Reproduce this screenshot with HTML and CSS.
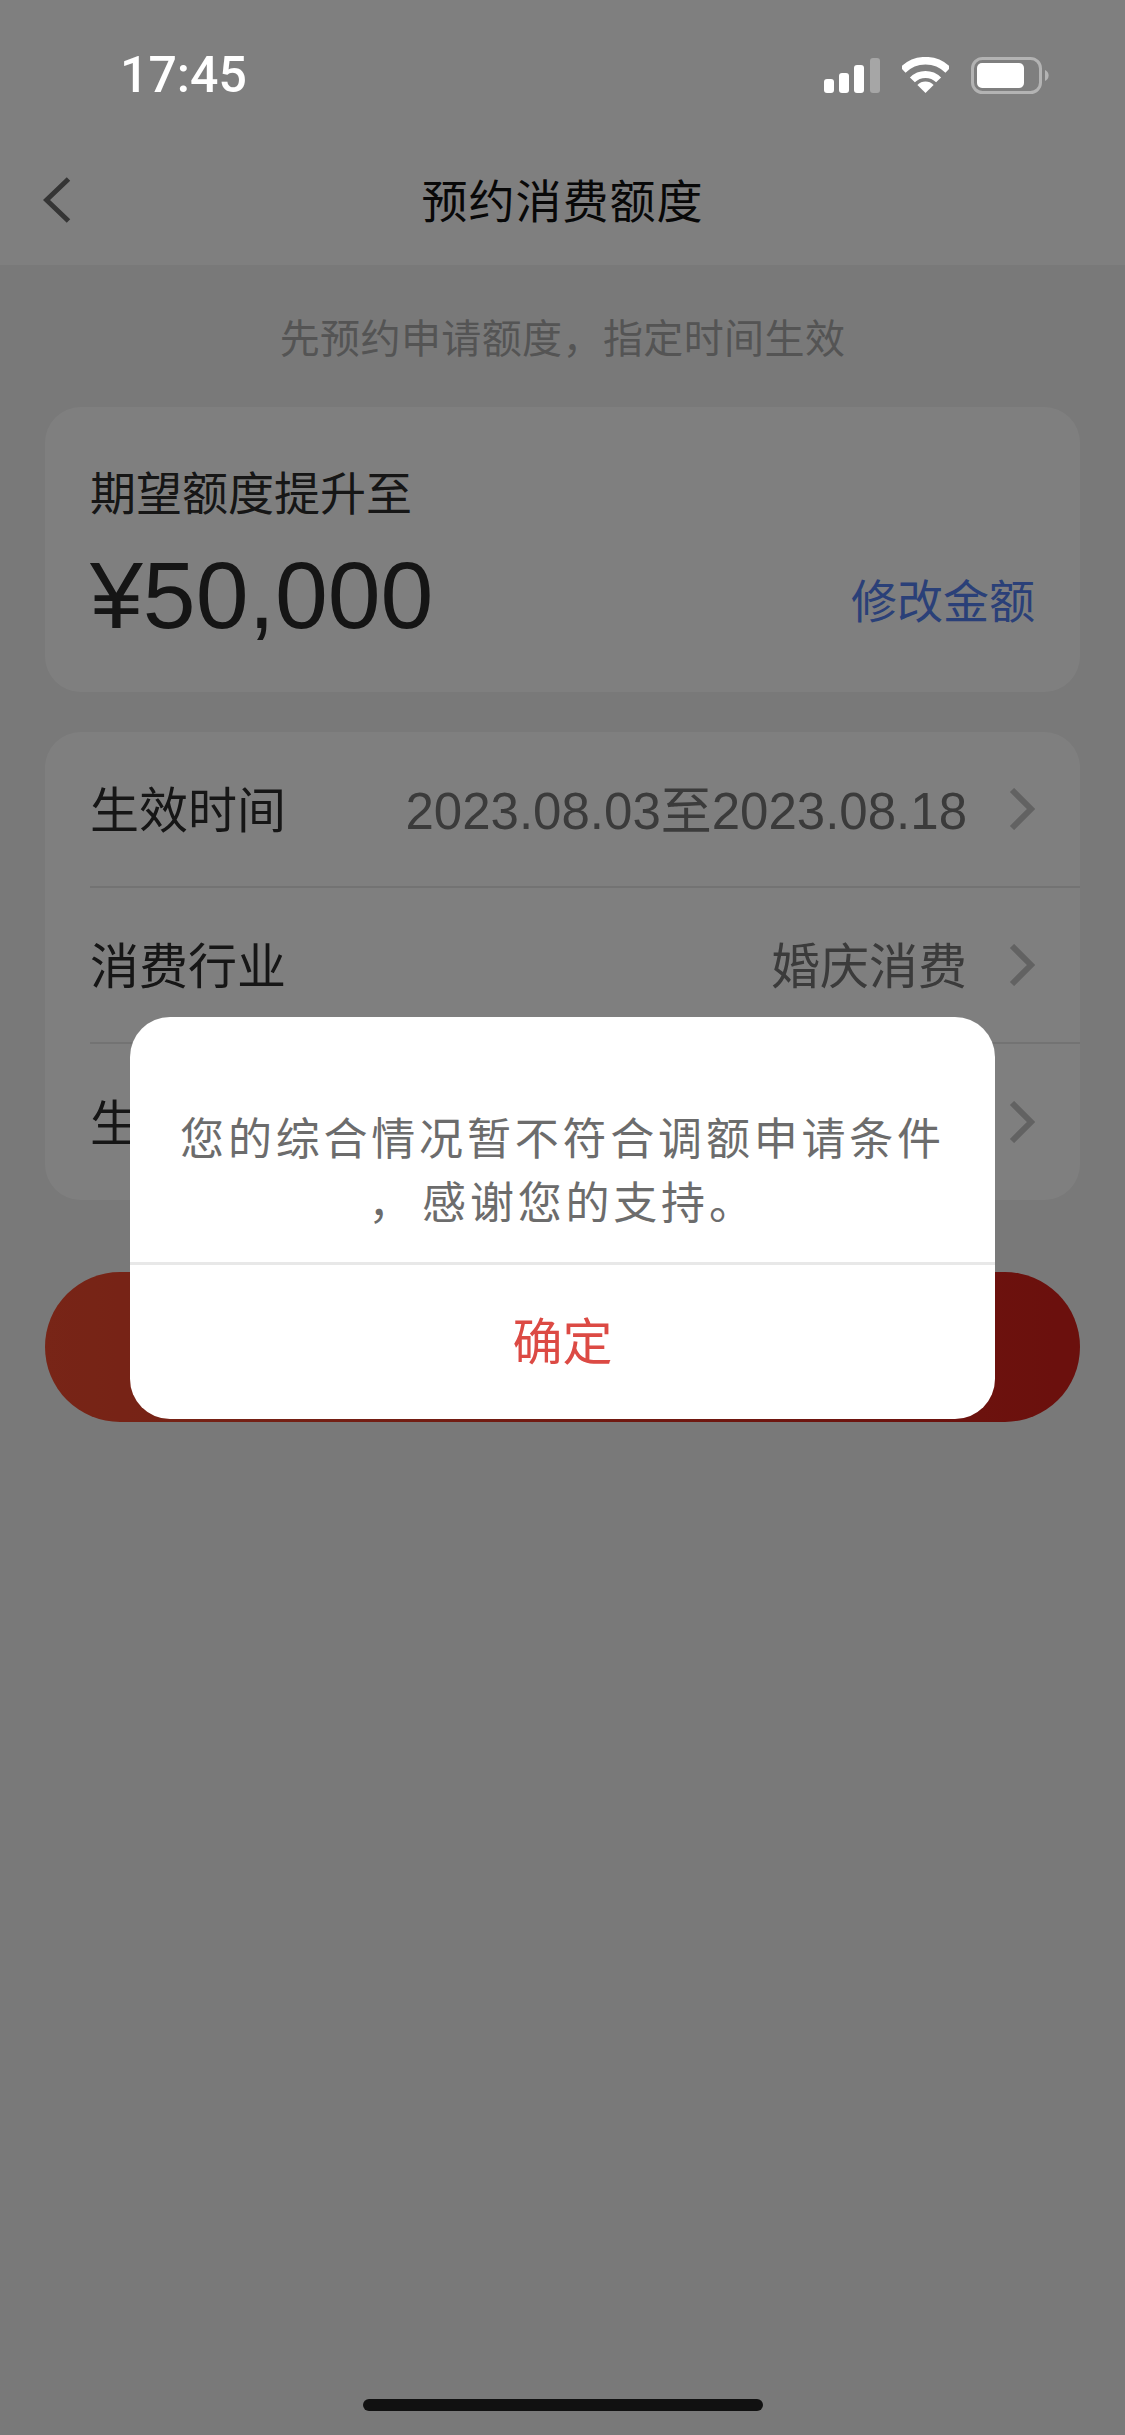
FILE: index.html
```html
<!DOCTYPE html>
<html lang="zh-CN">
<head>
    <meta charset="UTF-8">
    <meta name="viewport" content="width=device-width, initial-scale=1.0">
    <title>预约消费额度</title>
    <link rel="stylesheet" href="styles.css">
</head>
<body>
    <div class="page">
        <div class="header">
            <div class="status-bar">
                <span class="time">17:45</span>
                <div class="status-icons">
                    <svg class="icon-signal" viewBox="0 0 56 35">
                        <rect x="0" y="21" width="10" height="14" rx="3" fill="#fff"/>
                        <rect x="15" y="15" width="10" height="20" rx="3" fill="#fff"/>
                        <rect x="30" y="7" width="10" height="28" rx="3" fill="#fff"/>
                        <rect x="46" y="0" width="10" height="35" rx="3" fill="#a6a6a6"/>
                    </svg>
                    <svg class="icon-wifi" viewBox="0 0 47 36">
                        <path d="M0.9 13 A32 32 0 0 1 46.1 13" fill="none" stroke="#fff" stroke-width="7.5"/>
                        <path d="M10.4 22.9 A18.5 18.5 0 0 1 36.6 22.9" fill="none" stroke="#fff" stroke-width="7"/>
                        <path d="M15.4 27.9 A11.5 11.5 0 0 1 31.6 27.9 L23.5 36 Z" fill="#fff"/>
                    </svg>
                    <svg class="icon-battery" viewBox="0 0 78 37">
                        <rect x="1.5" y="1.5" width="68" height="34" rx="10" fill="none" stroke="#b3b3b3" stroke-width="3"/>
                        <rect x="6" y="6" width="47" height="25" rx="5" fill="#fff"/>
                        <path d="M74 13 A6 6 0 0 1 74 24 Z" fill="#b3b3b3"/>
                    </svg>
                </div>
            </div>
            <div class="nav-bar">
                <svg class="icon-back" viewBox="0 0 28 46">
                    <path d="M25.5 2 L3.5 23 L25.5 44" fill="none" stroke="#6a6a6a" stroke-width="5"/>
                </svg>
                <h1>预约消费额度</h1>
            </div>
        </div>

        <div class="content">
            <p class="subtitle">先预约申请额度，指定时间生效</p>

            <div class="card amount-card">
                <div class="amount-label">期望额度提升至</div>
                <div class="amount-row">
                    <span class="amount">¥50,000</span>
                    <a class="edit-link">修改金额</a>
                </div>
            </div>

            <div class="card list-card">
                <div class="list-row">
                    <span class="row-label">生效时间</span>
                    <span class="row-value date-value">2023.08.03至2023.08.18</span>
                    <svg class="icon-chevron" viewBox="0 0 26 42"><path d="M3 2 L22 21 L3 40" fill="none" stroke="#c4c4c4" stroke-width="6"/></svg>
                </div>
                <div class="list-row">
                    <span class="row-label">消费行业</span>
                    <span class="row-value">婚庆消费</span>
                    <svg class="icon-chevron" viewBox="0 0 26 42"><path d="M3 2 L22 21 L3 40" fill="none" stroke="#c4c4c4" stroke-width="6"/></svg>
                </div>
                <div class="list-row">
                    <span class="row-label">生</span>
                    <span class="row-value"></span>
                    <svg class="icon-chevron" viewBox="0 0 26 42"><path d="M3 2 L22 21 L3 40" fill="none" stroke="#c4c4c4" stroke-width="6"/></svg>
                </div>
            </div>

            <div class="submit-btn"></div>
        </div>

        <div class="home-indicator"></div>
    </div>

    <div class="overlay">
        <div class="dialog">
            <p class="dialog-msg">您的综合情况暂不符合调额申请条件<br><span class="msg-comma">，</span>感谢您的支持。</p>
            <div class="dialog-btn">确定</div>
        </div>
    </div>
</body>
</html>
```

FILE: styles.css
```css
* {
    margin: 0;
    padding: 0;
    box-sizing: border-box;
    font-family: "Liberation Sans", "Noto Sans CJK SC", sans-serif;
}

body {
    background: #f3f3f3;
    width: 1125px;
    height: 2435px;
    overflow: hidden;
}

.page {
    height: 2435px;
    display: flex;
    flex-direction: column;
}

.header {
    height: 265px;
    background: #fff;
}

.status-bar {
    height: 150px;
    padding: 0 76px 0 120px;
    display: flex;
    align-items: center;
    justify-content: space-between;
    position: relative;
    z-index: 20;
}

.time {
    font-family: Roboto, sans-serif;
    font-size: 50px;
    font-weight: 500;
    color: #fff;
}

.status-icons {
    display: flex;
    align-items: center;
    gap: 22px;
}

.icon-signal {
    width: 56px;
    height: 35px;
}

.icon-wifi {
    width: 47px;
    height: 36px;
}

.icon-battery {
    width: 78px;
    height: 37px;
}

.nav-bar {
    height: 100px;
    padding-bottom: 5px;
    display: flex;
    align-items: center;
    justify-content: center;
    position: relative;
}

.nav-bar h1 {
    font-size: 46px;
    font-weight: 400;
    letter-spacing: 1px;
    color: #111;
}

.icon-back {
    position: absolute;
    left: 43px;
    top: 27px;
    width: 28px;
    height: 46px;
}

.content {
    flex-grow: 1;
    padding: 0 45px;
}

.subtitle {
    margin: 44px 0 38px;
    line-height: 60px;
    font-size: 40px;
    letter-spacing: 0.4px;
    text-align: center;
    color: #a8a8a8;
}

.card {
    background: #fff;
    border-radius: 36px;
}

.amount-card {
    height: 285px;
    padding: 55px 45px 0;
    margin-bottom: 40px;
}

.amount-label {
    font-size: 46px;
    line-height: 64px;
    color: #2c2c2c;
}

.amount-row {
    display: flex;
    justify-content: space-between;
    align-items: center;
    margin-top: 15px;
}

.amount {
    font-size: 95px;
    line-height: 108px;
    color: #2a2a2a;
}

.edit-link {
    font-size: 46px;
    color: #5580f0;
    margin-top: 6px;
}

.list-row {
    height: 156px;
    margin-left: 45px;
    padding-right: 45px;
    display: flex;
    align-items: center;
    border-bottom: 2px solid #e6e6e6;
}

.list-row:last-child {
    border-bottom: none;
}

.row-label {
    padding-bottom: 5px;
    font-size: 49px;
    color: #2c2c2c;
}

.row-value {
    margin-left: auto;
    padding-bottom: 5px;
    font-size: 49px;
    color: #777;
}

.date-value {
    font-size: 51px;
}

.icon-chevron {
    width: 26px;
    height: 42px;
    margin-left: 42px;
}

.submit-btn {
    height: 150px;
    margin-top: 72px;
    border-radius: 75px;
    background: linear-gradient(90deg, #f04a2e, #d6201a);
}

.home-indicator {
    width: 400px;
    height: 12px;
    margin: 0 auto 24px;
    border-radius: 6px;
    background: #222;
}

.overlay {
    position: fixed;
    inset: 0;
    z-index: 10;
    background: rgba(0, 0, 0, 0.5);
    display: flex;
    align-items: center;
    justify-content: center;
}

.dialog {
    width: 865px;
    height: 402px;
    background: #fff;
    border-radius: 40px;
    display: flex;
    flex-direction: column;
}

.dialog-msg {
    height: 248px;
    padding-top: 91px;
    border-bottom: 3px solid #e8e8e8;
    font-size: 44px;
    line-height: 64px;
    letter-spacing: 3.8px;
    text-align: center;
    color: #6c6c6c;
}

.msg-comma {
    margin-right: 6px;
}

.dialog-btn {
    flex-grow: 1;
    padding-bottom: 7px;
    display: flex;
    align-items: center;
    justify-content: center;
    font-size: 50px;
    color: #dc4a44;
}
```
